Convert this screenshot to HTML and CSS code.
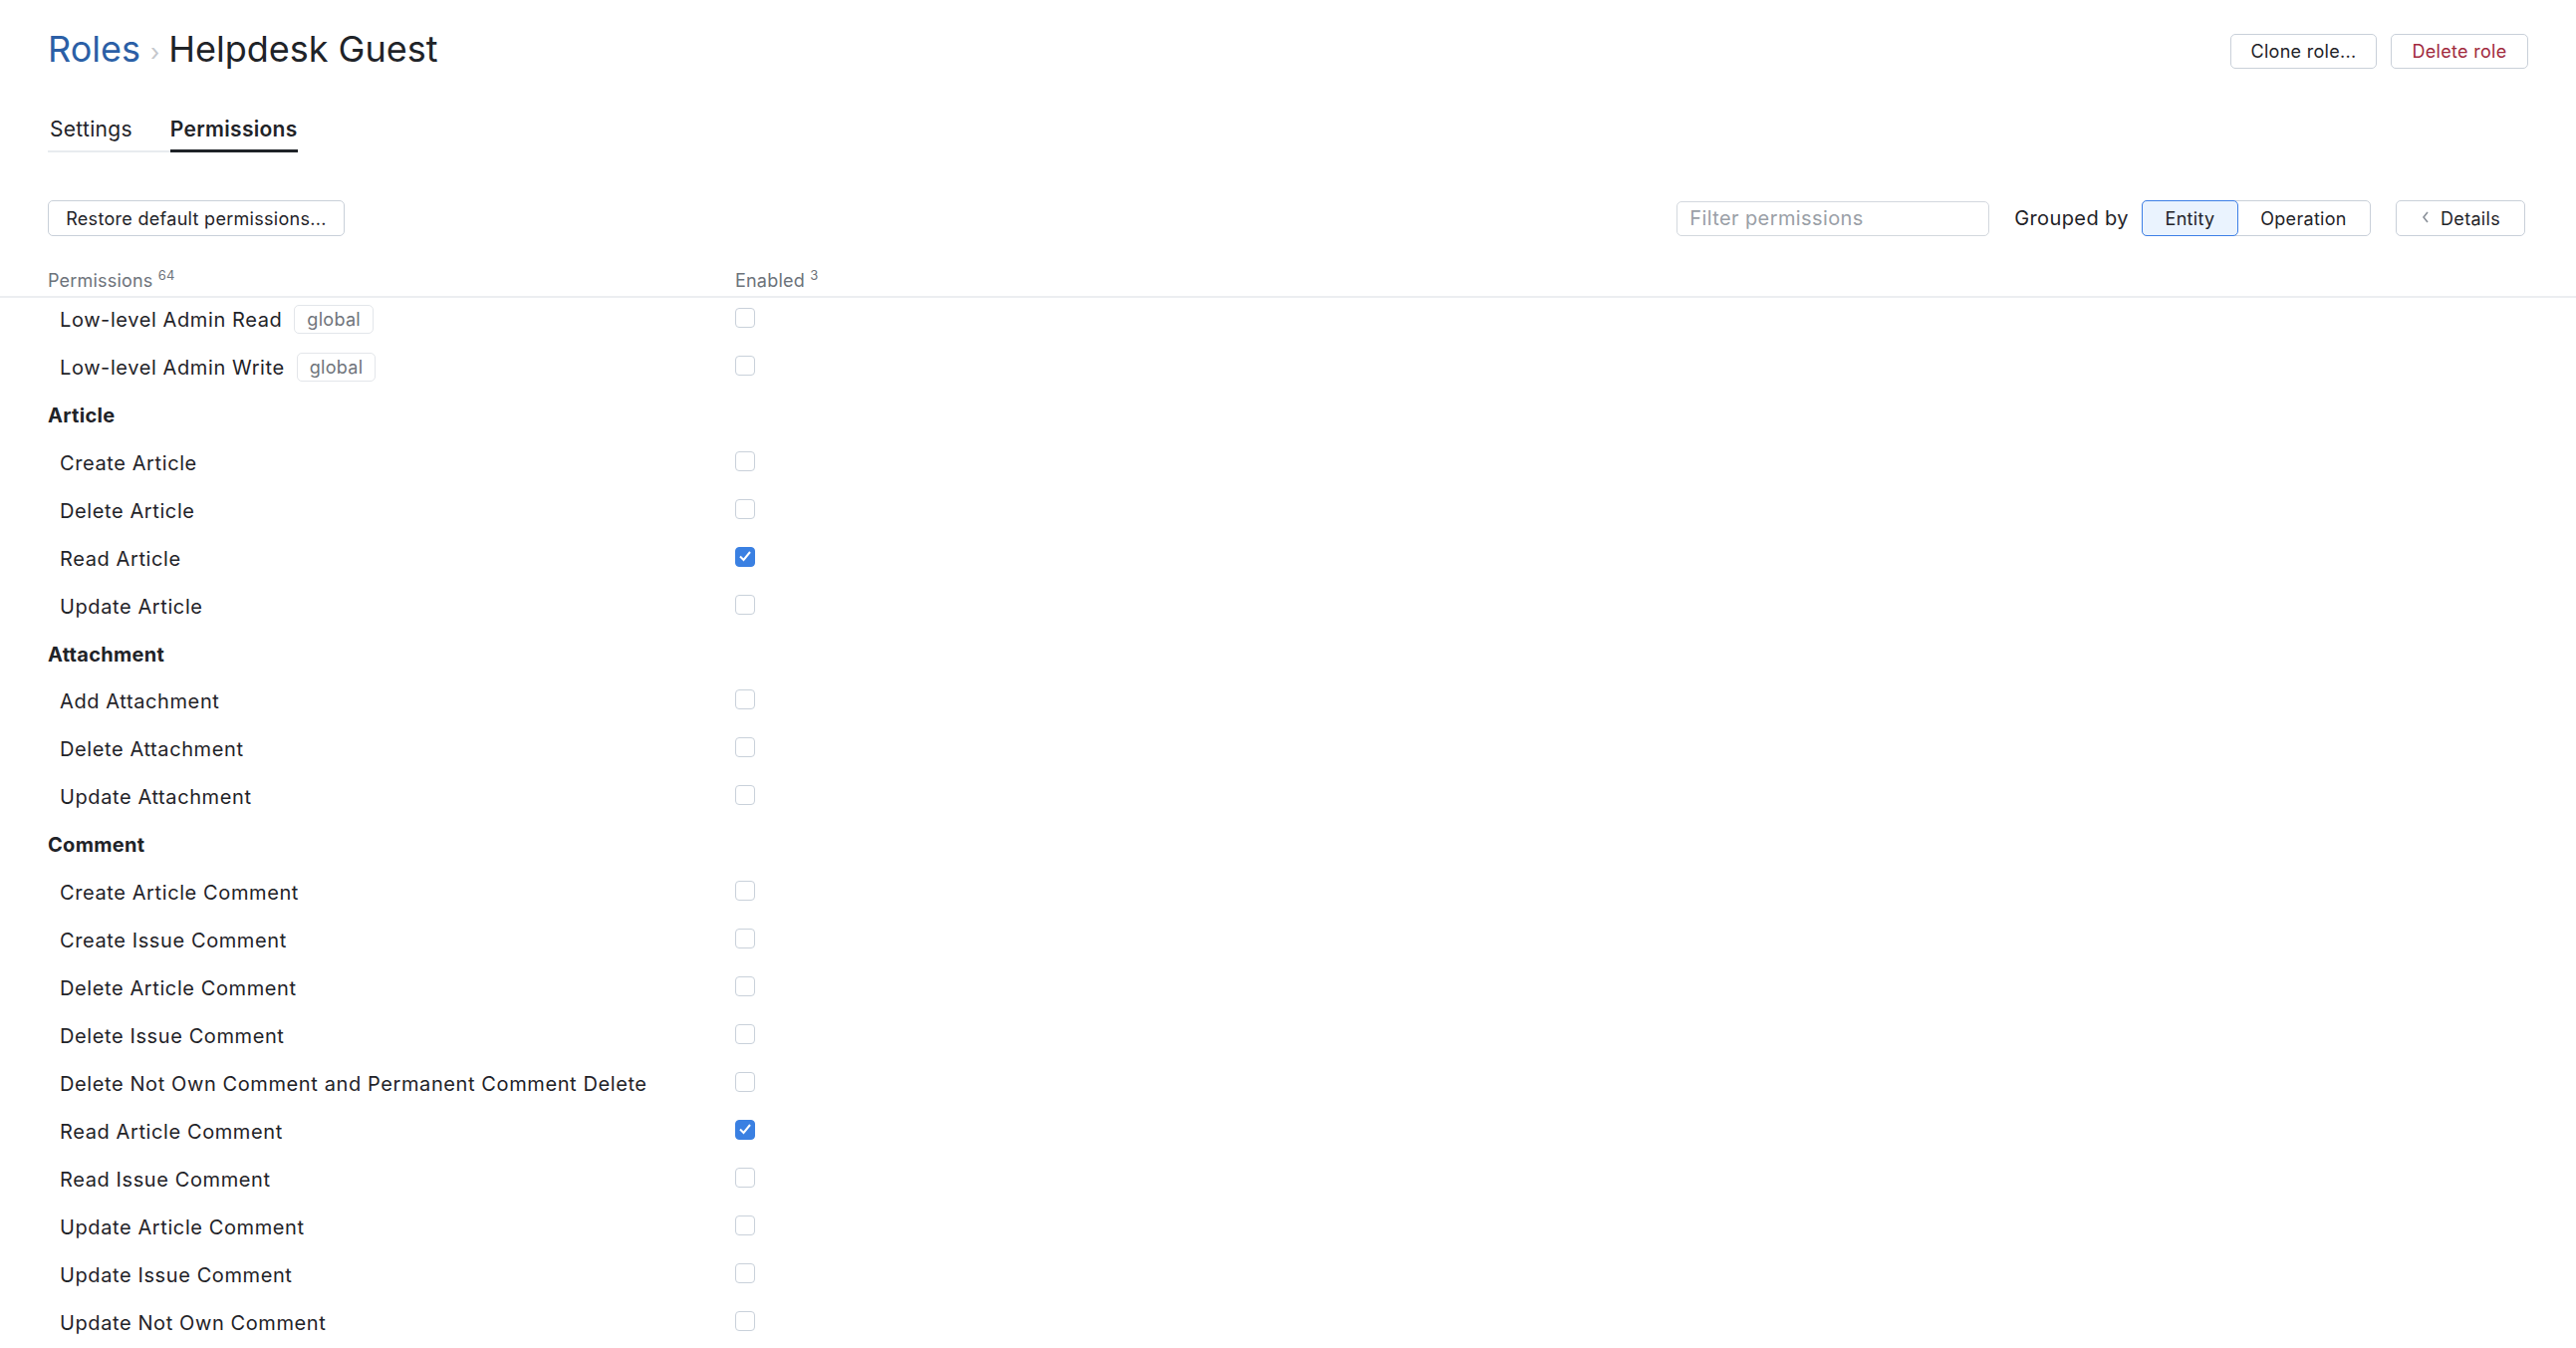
FILE: index.html
```html
<!DOCTYPE html>
<html lang="en">
<head>
    <meta charset="UTF-8">
    <title>Helpdesk Guest - Roles</title>
    <link rel="stylesheet" href="styles.css">
</head>
<body>

<div class="page">
    <div class="page-header">
        <h1 class="title"><a class="title-link" href="#">Roles</a><span class="title-sep">›</span><span>Helpdesk Guest</span></h1>
        <div class="header-actions">
            <button class="btn btn-clone">Clone role...</button>
            <button class="btn btn-danger">Delete role</button>
        </div>
    </div>

    <div class="tabs">
        <span class="tab">Settings</span>
        <span class="tab active">Permissions</span>
    </div>

    <div class="toolbar">
        <button class="btn">Restore default permissions...</button>
        <div class="toolbar-right">
            <input class="filter" type="text" placeholder="Filter permissions">
            <span class="grouped-label">Grouped by</span>
            <div class="segmented">
                <button class="segment selected">Entity</button>
                <button class="segment">Operation</button>
            </div>
            <button class="btn btn-details">
                <svg class="chevron" width="10" height="14" viewBox="0 0 10 14"><polyline points="7,2 3,7 7,12" fill="none" stroke="#8a9099" stroke-width="1.6"/></svg>
                Details
            </button>
        </div>
    </div>
</div>

<div class="table-head">
    <div class="col-name"><span>Permissions <sup>64</sup></span></div>
    <div class="col-enabled"><span>Enabled <sup>3</sup></span></div>
</div>

<div class="perm-list">
    <div class="row"><div class="col-name item">Low-level Admin Read <span class="tag">global</span></div><div class="col-enabled"><span class="checkbox"></span></div></div>
    <div class="row"><div class="col-name item">Low-level Admin Write <span class="tag">global</span></div><div class="col-enabled"><span class="checkbox"></span></div></div>

    <div class="row group">Article</div>
    <div class="row"><div class="col-name item">Create Article</div><div class="col-enabled"><span class="checkbox"></span></div></div>
    <div class="row"><div class="col-name item">Delete Article</div><div class="col-enabled"><span class="checkbox"></span></div></div>
    <div class="row"><div class="col-name item">Read Article</div><div class="col-enabled"><span class="checkbox checked"><svg width="20" height="20" viewBox="0 0 20 20"><polyline points="5,10.5 8.5,14 15,6" fill="none" stroke="#fff" stroke-width="2"/></svg></span></div></div>
    <div class="row"><div class="col-name item">Update Article</div><div class="col-enabled"><span class="checkbox"></span></div></div>

    <div class="row group">Attachment</div>
    <div class="row"><div class="col-name item">Add Attachment</div><div class="col-enabled"><span class="checkbox"></span></div></div>
    <div class="row"><div class="col-name item">Delete Attachment</div><div class="col-enabled"><span class="checkbox"></span></div></div>
    <div class="row"><div class="col-name item">Update Attachment</div><div class="col-enabled"><span class="checkbox"></span></div></div>

    <div class="row group">Comment</div>
    <div class="row"><div class="col-name item">Create Article Comment</div><div class="col-enabled"><span class="checkbox"></span></div></div>
    <div class="row"><div class="col-name item">Create Issue Comment</div><div class="col-enabled"><span class="checkbox"></span></div></div>
    <div class="row"><div class="col-name item">Delete Article Comment</div><div class="col-enabled"><span class="checkbox"></span></div></div>
    <div class="row"><div class="col-name item">Delete Issue Comment</div><div class="col-enabled"><span class="checkbox"></span></div></div>
    <div class="row"><div class="col-name item">Delete Not Own Comment and Permanent Comment Delete</div><div class="col-enabled"><span class="checkbox"></span></div></div>
    <div class="row"><div class="col-name item">Read Article Comment</div><div class="col-enabled"><span class="checkbox checked"><svg width="20" height="20" viewBox="0 0 20 20"><polyline points="5,10.5 8.5,14 15,6" fill="none" stroke="#fff" stroke-width="2"/></svg></span></div></div>
    <div class="row"><div class="col-name item">Read Issue Comment</div><div class="col-enabled"><span class="checkbox"></span></div></div>
    <div class="row"><div class="col-name item">Update Article Comment</div><div class="col-enabled"><span class="checkbox"></span></div></div>
    <div class="row"><div class="col-name item">Update Issue Comment</div><div class="col-enabled"><span class="checkbox"></span></div></div>
    <div class="row"><div class="col-name item">Update Not Own Comment</div><div class="col-enabled"><span class="checkbox"></span></div></div>
</div>

</body>
</html>
```

FILE: styles.css
```css
body {
    font-family: Inter, "Noto Sans", sans-serif;
    color: #1f2328;
    background-color: #fff;
    letter-spacing: 0.6px;
    margin: 0;
    padding: 0;
    overflow: hidden;
}
.page {
    padding: 27px 48px 0 48px;
}
.page-header {
    display: flex;
    align-items: center;
    justify-content: space-between;
}
.title {
    margin: 0;
    font-size: 36px;
    font-weight: 400;
    line-height: 44px;
    letter-spacing: 0;
}
.title-link {
    color: #2b5fa6;
    text-decoration: none;
}
.title-sep {
    color: #c4c7cc;
    font-size: 24px;
    margin: 0 9px 0 10px;
    vertical-align: 1px;
}
.header-actions {
    display: flex;
    gap: 14px;
}
.btn {
    font-family: inherit;
    font-size: 18px;
    letter-spacing: 0.3px;
    color: #1f2328;
    background-color: #fff;
    border: 1px solid #c9d0d9;
    border-radius: 5px;
    height: 36px;
    padding: 0 22px;
    cursor: pointer;
}
.header-actions .btn {
    height: 35px;
    padding: 0;
}
.btn-clone {
    width: 147px;
}
.btn-danger {
    width: 138px;
    color: #a1293d;
}
.tabs {
    display: inline-flex;
    gap: 38px;
    margin-top: 42px;
    border-bottom: 2px solid #e8ebef;
}
.tab {
    font-size: 21px;
    letter-spacing: 0.3px;
    line-height: 26px;
    padding: 0 0 7px 2px;
    margin-bottom: -2px;
    border-bottom: 3px solid transparent;
}
.tab.active {
    font-weight: 600;
    padding-left: 0;
    border-bottom-color: #1f2328;
}
.toolbar {
    display: flex;
    align-items: center;
    justify-content: space-between;
    margin-top: 48px;
}
.toolbar > .btn {
    width: 298px;
    padding: 0;
}
.toolbar-right {
    display: flex;
    align-items: center;
    margin-right: 3px;
}
.filter {
    font-family: inherit;
    font-size: 20px;
    letter-spacing: 0.4px;
    width: 314px;
    height: 35px;
    box-sizing: border-box;
    padding: 0 12px;
    border: 1px solid #d3d8de;
    border-radius: 5px;
    color: #1f2328;
    outline: none;
}
.filter::placeholder {
    color: #9aa0a7;
}
.grouped-label {
    font-size: 20px;
    letter-spacing: 0.4px;
    margin: 0 13px 0 25px;
}
.segmented {
    display: flex;
    border: 1px solid #c9d0d9;
    border-radius: 5px;
    height: 36px;
    box-sizing: border-box;
}
.segment {
    font-family: inherit;
    font-size: 18px;
    letter-spacing: 0.3px;
    color: #1f2328;
    background: none;
    border: none;
    padding: 0;
    cursor: pointer;
}
.segment:first-child {
    width: 96px;
}
.segment:last-child {
    width: 133px;
}
.segment.selected {
    background-color: #eaf3fe;
    border: 1px solid #3d7fe6;
    border-radius: 5px;
    margin: -1px;
    width: 97px;
}
.btn-details {
    margin-left: 25px;
    width: 130px;
    padding: 0;
    display: flex;
    align-items: center;
    justify-content: center;
    gap: 10px;
}
.chevron {
    margin-top: -3px;
}
.table-head {
    display: flex;
    margin-top: 28px;
    padding: 0 48px;
    height: 32px;
    border-bottom: 2px solid #eceef1;
    font-size: 18px;
    letter-spacing: 0.2px;
    color: #6d737b;
    align-items: center;
}
.table-head sup {
    font-size: 13px;
    vertical-align: 7px;
    line-height: 0;
}
.col-name {
    width: 690px;
    display: flex;
    align-items: center;
}
.perm-list {
    padding: 0 48px;
    margin-top: -2px;
}
.row {
    display: flex;
    align-items: center;
    height: 47.95px;
    font-size: 20px;
}
.row.group {
    font-weight: 700;
    letter-spacing: 0.3px;
}
.item {
    padding-left: 12px;
    box-sizing: border-box;
}
.tag {
    display: inline-block;
    font-size: 18px;
    letter-spacing: 0.3px;
    color: #6f747b;
    border: 1px solid #e3e6ea;
    border-radius: 5px;
    padding: 0 12px;
    line-height: 27px;
    margin-left: 12px;
}
.checkbox {
    display: block;
    width: 20px;
    height: 20px;
    box-sizing: border-box;
    border: 1.5px solid #c9d1da;
    border-radius: 4px;
    margin-top: -4px;
}
.checkbox.checked {
    background-color: #3a80e2;
    border-color: #3a80e2;
}
.checkbox svg {
    display: block;
    margin: -1.5px;
}
```
